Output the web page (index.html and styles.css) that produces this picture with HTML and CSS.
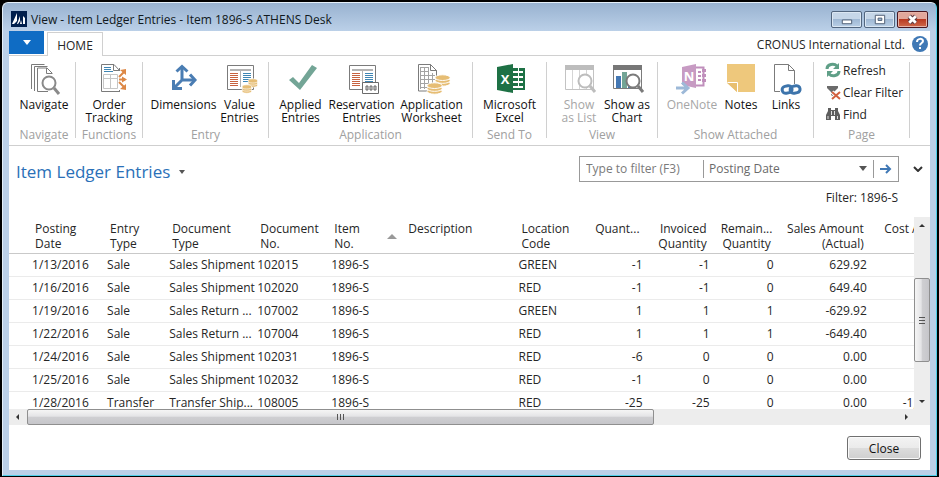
FILE: index.html
```html
<!DOCTYPE html>
<html lang="en">
<head>
<meta charset="utf-8">
<title>View - Item Ledger Entries - Item 1896-S ATHENS Desk</title>
<link rel="stylesheet" href="styles.css">
</head>
<body>
<svg class="defs" aria-hidden="true">
  <defs>
    <g id="ledger">
      <path d="M3.500 1.500h26v24h-26z" fill="#fff" stroke="#7b7b7b"/>
      <path d="M6 5h21v2H6z" fill="#b3b3b3"/><path d="M16 7h1v16h-1z" fill="#b3b3b3"/>
      <path d="M6 9.500h8M6 11.500h8M6 13.500h8M6 15.500h8M6 17.500h8M6 19.500h8M6 21.500h8" stroke="#c7623f"/>
      <path d="M19 9.500h8M19 11.500h8M19 13.500h8M19 15.500h8M19 17.500h8" stroke="#3f86b4"/>
    </g>
    <g id="coins" fill="#e6bd74" stroke="#fff" stroke-width="1">
      <ellipse cx="8" cy="13" rx="8" ry="3"/><ellipse cx="8" cy="10" rx="8" ry="3"/><ellipse cx="8" cy="7" rx="8" ry="3"/>
    </g>
    <g id="lens">
      <path d="M5 5l5 6" stroke-width="3"/><circle r="6.500" fill="#fff" stroke-width="2"/>
    </g>
  </defs>
</svg>

<div class="window">
  <header class="titlebar">
    <svg class="app-icon" viewBox="0 0 16 16" aria-hidden="true"><path fill="#001f4d" d="M0 0h16v16H0z"/><path fill="#fff" d="M1 13L6 2v8l-3 3zM6 13l3-8v5l-2 3zM9 13l1-4 1 4zM12 5l2 2v6h-2z"/></svg>
    <h1 class="caption">View - Item Ledger Entries - Item 1896-S ATHENS Desk</h1>
    <div class="win-buttons">
      <button class="win-btn" aria-label="Minimize"><svg viewBox="0 0 30 16"><path d="M10.500 8.500h10v4h-10z" fill="#fff" stroke="#4a5a70"/></svg></button>
      <button class="win-btn" aria-label="Maximize"><svg viewBox="0 0 30 16"><path d="M10.500 3.500h10v9h-10z" fill="#fff" stroke="#4a5a70"/><path d="M13.500 6.500h4v2.500h-4z" fill="#9db7d4" stroke="#4a5a70"/></svg></button>
      <button class="win-btn win-close" aria-label="Close window"><svg viewBox="0 0 30 16"><path d="M11.500 4.500l7 7M18.500 4.500l-7 7" stroke="#5c3a40" stroke-width="5"/><path d="M11.500 4.500l7 7M18.500 4.500l-7 7" stroke="#fff" stroke-width="3"/></svg></button>
    </div>
  </header>

  <main class="client">
    <nav class="tabs">
      <button class="app-menu" aria-label="Application menu"><svg viewBox="0 0 8 5"><path d="M0 0h8L4 5z" fill="#fff"/></svg></button>
      <a class="tab" href="#home">HOME</a>
      <span class="company">CRONUS International Ltd.</span>
      <button class="help" aria-label="Help"><svg viewBox="0 0 16 16"><circle cx="8" cy="8" r="8" fill="#3f78b5"/><path d="M5 6c0-4 6-4 6-1 0 2-3 2-3 4.500M8 11v2" fill="none" stroke="#fff" stroke-width="2"/></svg></button>
    </nav>

    <section class="ribbon" id="home">
      <div class="group g-navigate">
        <div class="tools">
          <button class="tool"><svg viewBox="0 0 32 32" fill="none" stroke="#7b7b7b"><path d="M3.500 25V.5h13M6.500 27V2.500h13M24 10v-1l-5-5h-9.500v23.500H20"/><path d="M18.500 4v5.500H24"/><use href="#lens" x="21" y="19" stroke="#8a8a8a"/></svg><span>Navigate</span></button>
        </div>
        <div class="group-name">Navigate</div>
      </div>
      <div class="group g-functions">
        <div class="tools">
          <button class="tool"><svg viewBox="0 0 32 32" fill="none" stroke="#7b7b7b"><path d="M26.500 6V27.500h-18V.5H21l5.500 6H20.500V.5"/><path d="M11 3.500h7M11 5.500h7M11 7.500h9" stroke="#3f86b4"/><path d="M10.500 10.500h14v14h-14zM17.500 10v15M10 14.500h15" stroke="#c6c6c6"/><path d="M25 7h10v20H25z" fill="#fff" stroke="none"/><path d="M26.500 4v3M26.500 26v2"/><path d="M26 15.500h6M26 13l5-5M26 18l5 5" stroke="#dd8846" stroke-width="2"/><path d="M34 15.500l-5-3v6zM33 5v6l-6-5zM33 26v-6l-6 5z" fill="#dd8846" stroke="none"/></svg><span>Order<br>Tracking</span></button>
        </div>
        <div class="group-name">Functions</div>
      </div>
      <div class="group g-entry">
        <div class="tools">
          <button class="tool"><svg viewBox="0 0 32 32" fill="none" stroke="#4a7db3" stroke-width="3"><path d="M14 4v12h11M14 16l-7 7"/><path d="M8.500 7.500L14 2.500l5.500 5M22 10.500l5 5.500-5 5.500M5.500 16v8.500H14"/></svg><span>Dimensions</span></button>
          <button class="tool"><svg viewBox="0 0 32 32"><use href="#ledger"/><g transform="translate(24 12) scale(.6 .7)"><use href="#coins"/></g><g transform="translate(18 18) scale(.6 .7)"><use href="#coins"/></g></svg><span>Value<br>Entries</span></button>
        </div>
        <div class="group-name">Entry</div>
      </div>
      <div class="group g-application">
        <div class="tools">
          <button class="tool"><svg viewBox="0 0 32 32"><path d="M4 16l4-3 6 6L27 1l5 3-17 22z" fill="#73a596"/></svg><span>Applied<br>Entries</span></button>
          <button class="tool"><svg viewBox="0 0 32 32"><use href="#ledger"/><path d="M16.500 18.500h16v11h-16z" fill="#fff" stroke="#6b6b6b"/><path d="M20 22h2v4h-2zM24 22h2v4h-2zM28 22h2v4h-2z" fill="#ddd" stroke="#666"/></svg><span>Reservation<br>Entries</span></button>
          <button class="tool"><svg viewBox="0 0 32 32"><path d="M2.500.5h12l6 6v20.500h-18z" fill="#fff" stroke="#7b7b7b"/><path d="M4.500 3v22M8.500 3v22M12.500 3v22M16.500 9v16M4 3.500h9M4 7.500h9M4 11.500h15M4 15.500h15M4 19.500h15M4 23.500h15" stroke="#a3a3a3"/><path d="M14.500.5v6h6z" fill="#fff" stroke="#7b7b7b"/><g transform="translate(19 7) scale(.95)"><use href="#coins"/></g><g transform="translate(11 15) scale(.95)"><use href="#coins"/></g></svg><span>Application<br>Worksheet</span></button>
        </div>
        <div class="group-name">Application</div>
      </div>
      <div class="group g-send">
        <div class="tools">
          <button class="tool"><svg viewBox="0 0 32 32"><path d="M18 4.500h13v22H18z" fill="#fff"/><path d="M20 4h5v3h-5zM26 4h5v3h-5zM20 9h5v3h-5zM26 9h5v3h-5zM20 14h5v3h-5zM26 14h5v3h-5zM20 19h5v3h-5zM26 19h5v3h-5zM20 24h11v2H20z" fill="#1e7145"/><path d="M30 4h2v22h-2z" fill="#1e7145"/><path d="M4 3l16-3v29L4 26z" fill="#1e7145"/><text x="12" y="20" class="glyph">X</text></svg><span>Microsoft<br>Excel</span></button>
        </div>
        <div class="group-name">Send To</div>
      </div>
      <div class="group g-view">
        <div class="tools">
          <button class="tool" disabled><svg viewBox="0 0 32 32"><path d="M2.500 1.500h28v24h-28z" fill="#fff" stroke="#c3c3c3"/><path d="M2 1h29v5H2z" fill="#bdbdbd"/><path d="M9.500 6v19M16.500 6v19M23.500 6v19" stroke="#d5d5d5"/><use href="#lens" x="22" y="17" stroke="#bdbdbd"/></svg><span>Show<br>as List</span></button>
          <button class="tool"><svg viewBox="0 0 32 32"><path d="M2.500 1.500h28v23h-28z" fill="#fff" stroke="#7b7b7b"/><path d="M2 1h29v5H2z" fill="#777"/><path d="M5 12h5v12H5z" fill="#4478b4"/><path d="M11 8h5v16h-5z" fill="#73a596"/><path d="M17 14h5v10h-5z" fill="#4478b4"/><use href="#lens" x="22" y="17" stroke="#7b7b7b"/></svg><span>Show as<br>Chart</span></button>
        </div>
        <div class="group-name">View</div>
      </div>
      <div class="group g-attached">
        <div class="tools">
          <button class="tool" disabled><svg viewBox="0 0 32 32"><path d="M20 3.500h7.500v18H20" fill="#fff" stroke="#c08fbc" stroke-width="2"/><path d="M26 5h4v3h-4zM26 10h4v3h-4zM26 15h4v3h-4z" fill="#c08fbc"/><path d="M22 8h3M22 12h3M22 16h3" stroke="#c08fbc" stroke-width="2"/><path d="M6 3l14-3v24L6 21z" fill="#c79bc3"/><text x="13" y="17" class="glyph">N</text><path d="M0 24h10M6 18.500l6 5.500-6 5.500" fill="none" stroke="#9db9d8" stroke-width="3"/></svg><span>OneNote</span></button>
          <button class="tool"><svg viewBox="0 0 32 32"><path d="M2 0h28v28H12L2 18z" fill="#eec87c"/><path d="M3 18.500h9.500V28" fill="none" stroke="#fff"/><path d="M2 19l10 9v-9z" fill="#e8bf70"/></svg><span>Notes</span></button>
          <button class="tool"><svg viewBox="0 0 32 32"><path d="M4.500.5h14l6 6v21h-20zM18.500.5v6h6" fill="#fff" stroke="#7b7b7b"/><path d="M10 20h22v11H10z" fill="#fff"/><g fill="none" stroke="#3d74ab" stroke-width="3"><rect x="12" y="22" width="10" height="7" rx="3.500" transform="rotate(-12 17 25)"/><rect x="20" y="22" width="10" height="7" rx="3.500" transform="rotate(-12 25 25)"/></g></svg><span>Links</span></button>
        </div>
        <div class="group-name">Show Attached</div>
      </div>
      <div class="group g-page">
        <div class="small-tools">
          <button class="small-tool"><svg viewBox="0 0 16 16" fill="none" stroke="#5f9f87" stroke-width="3"><path d="M2 7c0-5 7-6 10-3M14 9c0 5-7 6-10 3"/><path d="M14 1v6H8zM2 15V9h6z" fill="#5f9f87" stroke="none"/></svg>Refresh</button>
          <button class="small-tool"><svg viewBox="0 0 16 16"><path d="M2 2h11v2L9 8v5l-3-2V8L2 4z" fill="#6b6b6b"/><path d="M7 8l8 7M15 8l-8 7" stroke="#fff" stroke-width="4"/><path d="M7 8l8 7M15 8l-8 7" stroke="#d2603f" stroke-width="2"/></svg>Clear Filter</button>
          <button class="small-tool"><svg viewBox="0 0 16 16"><path d="M3 2h3v2h4V2h3v3l2 4v5h-5v-4H6v4H1V9l2-4z" fill="#5d5d5d"/><path d="M3 10v3M12.500 10v3M6.500 5v4M9.500 5v4" stroke="#ddd"/></svg>Find</button>
        </div>
        <div class="group-name">Page</div>
      </div>
    </section>

    <section class="page-head">
      <button class="page-title">Item Ledger Entries<svg viewBox="0 0 6 4"><path d="M0 0h6L3 4z" fill="#555"/></svg></button>
      <form class="filter">
        <input class="filter-text" type="text" placeholder="Type to filter (F3)" aria-label="Type to filter">
        <select class="filter-field" aria-label="Filter field"><option>Posting Date</option></select>
        <svg class="drop" viewBox="0 0 8 5" aria-hidden="true"><path d="M0 0h8L4 5z" fill="#555"/></svg>
        <button class="go" type="button" aria-label="Apply filter"><svg viewBox="0 0 12 10"><path d="M0 5h10M6 1l4 4-4 4" fill="none" stroke="#3f78b5" stroke-width="2"/></svg></button>
      </form>
      <button class="expand" aria-label="Expand filter pane"><svg viewBox="0 0 10 6"><path d="M1 1l4 4 4-4" fill="none" stroke="#333" stroke-width="2"/></svg></button>
    </section>
    <p class="filter-info">Filter: 1896-S</p>

    <section class="grid">
      <div class="grid-view">
        <table>
          <colgroup><col class="c-mark"><col class="c-date"><col class="c-entry"><col class="c-doctype"><col class="c-no"><col class="c-no"><col class="c-desc"><col class="c-loc"><col class="c-qty"><col class="c-inv"><col class="c-rem"><col class="c-amount"><col class="c-amount"></colgroup>
          <thead>
            <tr><th></th><th>Posting<br>Date</th><th>Entry<br>Type</th><th>Document<br>Type</th><th>Document<br>No.</th><th><div class="sorted"><span>Item<br>No.</span><svg viewBox="0 0 10 5"><path d="M0 5h10L5 0z" fill="#999"/></svg></div></th><th>Description</th><th>Location<br>Code</th><th class="num">Quant...</th><th class="num">Invoiced<br>Quantity</th><th class="num">Remain...<br>Quantity</th><th class="num">Sales Amount<br>(Actual)</th><th class="num">Cost Amount<br>(Actual)</th></tr>
          </thead>
          <tbody>
            <tr><td></td><td>1/13/2016</td><td>Sale</td><td>Sales Shipment</td><td>102015</td><td>1896-S</td><td></td><td>GREEN</td><td class="num">-1</td><td class="num">-1</td><td class="num">0</td><td class="num">629.92</td><td></td></tr>
            <tr><td></td><td>1/16/2016</td><td>Sale</td><td>Sales Shipment</td><td>102020</td><td>1896-S</td><td></td><td>RED</td><td class="num">-1</td><td class="num">-1</td><td class="num">0</td><td class="num">649.40</td><td></td></tr>
            <tr><td></td><td>1/19/2016</td><td>Sale</td><td>Sales Return ...</td><td>107002</td><td>1896-S</td><td></td><td>GREEN</td><td class="num">1</td><td class="num">1</td><td class="num">1</td><td class="num">-629.92</td><td></td></tr>
            <tr><td></td><td>1/22/2016</td><td>Sale</td><td>Sales Return ...</td><td>107004</td><td>1896-S</td><td></td><td>RED</td><td class="num">1</td><td class="num">1</td><td class="num">1</td><td class="num">-649.40</td><td></td></tr>
            <tr><td></td><td>1/24/2016</td><td>Sale</td><td>Sales Shipment</td><td>102031</td><td>1896-S</td><td></td><td>RED</td><td class="num">-6</td><td class="num">0</td><td class="num">0</td><td class="num">0.00</td><td></td></tr>
            <tr><td></td><td>1/25/2016</td><td>Sale</td><td>Sales Shipment</td><td>102032</td><td>1896-S</td><td></td><td>RED</td><td class="num">-1</td><td class="num">0</td><td class="num">0</td><td class="num">0.00</td><td></td></tr>
            <tr><td></td><td>1/28/2016</td><td>Transfer</td><td>Transfer Ship...</td><td>108005</td><td>1896-S</td><td></td><td>RED</td><td class="num">-25</td><td class="num">-25</td><td class="num">0</td><td class="num">0.00</td><td class="num">-1,250.00</td></tr>
          </tbody>
        </table>
      </div>
      <div class="vbar">
        <svg class="arrow" viewBox="0 0 16 16"><path d="M5 10h6L8 7z" fill="#333"/></svg>
        <div class="track"><div class="thumb"><svg viewBox="0 0 8 8"><path d="M1 1.500h6M1 4.500h6M1 7.500h6" stroke="#555"/></svg></div></div>
        <svg class="arrow" viewBox="0 0 16 16"><path d="M5 7h6l-3 3z" fill="#333"/></svg>
      </div>
      <div class="hbar">
        <svg class="arrow" viewBox="0 0 16 16"><path d="M10 5v6L7 8z" fill="#333"/></svg>
        <div class="track"><div class="thumb"><svg viewBox="0 0 8 8"><path d="M.5 1v6M3.500 1v6M6.500 1v6" stroke="#555"/></svg></div></div>
        <svg class="arrow" viewBox="0 0 16 16"><path d="M7 5v6l3-3z" fill="#333"/></svg>
      </div>
    </section>

    <footer class="footer"><button class="close">Close</button></footer>
  </main>
</div>
</body>
</html>
```
FILE: styles.css
```css
* { box-sizing: border-box; }
html, body { height: 100%; margin: 0; }
body {
  background: #000;
  padding: 2px 2px 1px;
  font: 12px/15px "Open Sans", "Noto Sans", sans-serif;
  color: #262626;
}
button, input, select { font: inherit; color: inherit; margin: 0; padding: 0; border: 0; background: none; }
svg { display: block; }
.defs { position: absolute; width: 0; height: 0; }

/* Window frame */
.window {
  display: flex;
  flex-direction: column;
  height: 100%;
  padding: 0 6px 5px;
  border: 1px solid #e4eff9;
  border-right-color: #4fd0ea;
  border-bottom-color: #4fd0ea;
  border-radius: 6px 6px 0 0;
  background: linear-gradient(#98b2d0, #bbd0e8 28px, #bbd0e8);
}
.titlebar { display: flex; align-items: center; height: 28px; padding: 4px 2px 0; flex: none; }
.app-icon { width: 16px; height: 16px; }
.caption { flex: 1; margin: 0 0 0 4px; font-size: 12px; font-weight: 400; color: #101820; white-space: nowrap; }
.win-buttons { display: flex; gap: 2px; align-self: flex-start; margin-top: 4px; }
.win-btn { width: 31px; height: 17px; border: 1px solid #52667f; border-radius: 2px; background: linear-gradient(#c5d6e8 45%, #9fb8d4 50%, #b9cfe6); box-shadow: inset 0 0 0 1px #dbe7f3; }
.win-btn svg { width: 100%; height: 100%; }
.win-close { border-color: #4b1720; background: linear-gradient(#e2a79b 45%, #b93a22 50%, #cf6a4c); box-shadow: inset 0 0 0 1px #e6b3a8; }
.client { display: flex; flex-direction: column; flex: 1; min-height: 0; background: #fff; }

/* Tabs */
.tabs { display: flex; align-items: flex-end; height: 25px; flex: none; border-bottom: 1px solid #d0d0d0; padding-right: 2px; }
.app-menu { width: 35px; height: 23px; margin-bottom: 1px; background: #0f6cc4; }
.app-menu svg { width: 8px; height: 5px; margin: 0 auto; }
.tab { height: 24px; width: 56px; margin: 0 auto -1px 3px; border: 1px solid #d0d0d0; border-bottom: 0; background: #fff; color: #262626; text-align: center; text-decoration: none; line-height: 26px; }
.company { line-height: 20px; }
.help { margin: 0 0 3px 7px; }
.help svg { width: 16px; height: 16px; }

/* Ribbon */
.ribbon { display: flex; flex: none; height: 90px; padding: 6px 0 7px; border-bottom: 1px solid #cfcfcf; }
.group { display: flex; flex-direction: column; flex: none; border-right: 1px solid #d0d0d0; }
.tools { display: grid; flex: 1; justify-content: center; }
.tool { display: flex; flex-direction: column; align-items: center; gap: 2px; padding-top: 2px; color: #111; line-height: 13px; white-space: nowrap; }
.tool svg { width: 32px; height: 32px; overflow: visible; }
.tool:disabled { color: #a6a6a6; }
.glyph { font-size: 13px; font-weight: 700; fill: #fff; stroke: none; text-anchor: middle; }
.group-name { margin-bottom: -4px; color: #a0a0a0; text-align: center; line-height: 15px; }
.g-navigate { width: 67px; padding-left: 4px; }
.g-functions { width: 67px; }
.g-entry { width: 126px; }
.g-entry .tools { grid-template-columns: 68px 44px; }
.g-application { width: 204px; }
.g-application .tools { grid-template-columns: 60px 62px 78px; }
.g-send { width: 74px; }
.g-view { width: 111px; }
.g-view .tools { grid-template-columns: 50px 46px; }
.g-attached { width: 156px; }
.g-attached .tools { grid-template-columns: 51px 47px 43px; padding-left: 3px; }
.g-page { width: 96px; }
.small-tools { display: flex; flex-direction: column; flex: 1; margin-top: -3px; padding-left: 11px; }
.small-tool { display: flex; align-items: center; gap: 2px; height: 22px; line-height: 15px; white-space: nowrap; }
.small-tool svg { width: 16px; height: 16px; }

/* Page heading and filter */
.page-head { display: flex; align-items: center; flex: none; height: 36px; padding: 9px 7px 0 7px; }
.page-title { display: flex; align-items: center; gap: 9px; margin-right: auto; padding-top: 6px; font-size: 17px; line-height: 24px; color: #2a70b8; white-space: nowrap; }
.page-title svg { width: 6px; height: 4px; }
.filter { display: flex; align-items: center; width: 320px; height: 26px; border: 1px solid #999; color: #6a6a6a; }
.filter-text { flex: 1; min-width: 0; padding-left: 6px; outline: 0; }
.filter-text::placeholder { color: #7a7a7a; opacity: 1; }
.filter-field { appearance: none; width: 156px; height: 18px; padding-left: 5px; border-left: 1px solid #999; }
.drop { width: 8px; height: 5px; margin-right: 6px; }
.go { height: 18px; width: 25px; border-left: 1px solid #999; }
.go svg { width: 12px; height: 10px; margin: 0 auto; }
.expand { margin-left: 14px; }
.expand svg { width: 10px; height: 6px; }
.filter-info { margin: 8px 32px 12px; text-align: right; flex: none; }

/* Grid */
.grid { display: grid; grid-template: minmax(0, 1fr) 16px / minmax(0, 1fr) 16px; flex: 1; min-height: 0; background: #ededed; }
.grid-view { overflow: hidden; background: #fff; }
table { width: 955px; table-layout: fixed; border-collapse: separate; border-spacing: 0; }
.c-mark { width: 19px; }
.c-date { width: 75px; }
.c-entry { width: 62px; }
.c-doctype { width: 88px; }
.c-no { width: 74px; }
.c-desc { width: 113px; }
.c-loc { width: 66px; }
.c-qty { width: 66px; }
.c-inv { width: 67px; }
.c-rem { width: 64px; }
.c-amount { width: 93px; }
th, td { text-align: left; font-weight: 400; white-space: nowrap; }
th { height: 37px; padding: 4px 7px 2px; vertical-align: top; border-bottom: 1px solid #c9c9c9; line-height: 15px; }
td { height: 23px; padding: 0 4px 1px; border-bottom: 1px solid #ebebeb; }
td:last-child { padding-right: 10px; }
.num { text-align: right; }
.sorted { display: flex; justify-content: space-between; align-items: center; }
.sorted svg { width: 10px; height: 5px; margin-right: -3px; }
.vbar, .hbar { display: flex; background: #ededed; }
.vbar { flex-direction: column; }
.arrow { flex: none; width: 16px; height: 16px; }
.track { display: flex; flex: 1; }
.vbar .track { flex-direction: column; justify-content: center; padding-top: 14px; }
.thumb { display: flex; align-items: center; justify-content: center; border: 1px solid #8f8f8f; border-radius: 2px; background: linear-gradient(#f5f5f5, #e4e4e6 45%, #cfcfd2 50%, #c6c6ca); }
.vbar .thumb { height: 58%; background: linear-gradient(90deg, #f5f5f5, #e4e4e6 45%, #cfcfd2 50%, #c6c6ca); }
.hbar .track { padding-left: 2px; }
.hbar .thumb { width: 72%; }
.thumb svg { width: 8px; height: 8px; }

.footer { display: flex; justify-content: flex-end; flex: none; padding: 11px 9px 10px; }
.close { width: 74px; height: 24px; border: 1px solid #707070; border-radius: 3px; background: linear-gradient(#f3f3f3, #ebebeb 48%, #dcdcdc 52%, #cfcfcf); box-shadow: inset 0 0 0 1px #fafafa; color: #111; }
```
